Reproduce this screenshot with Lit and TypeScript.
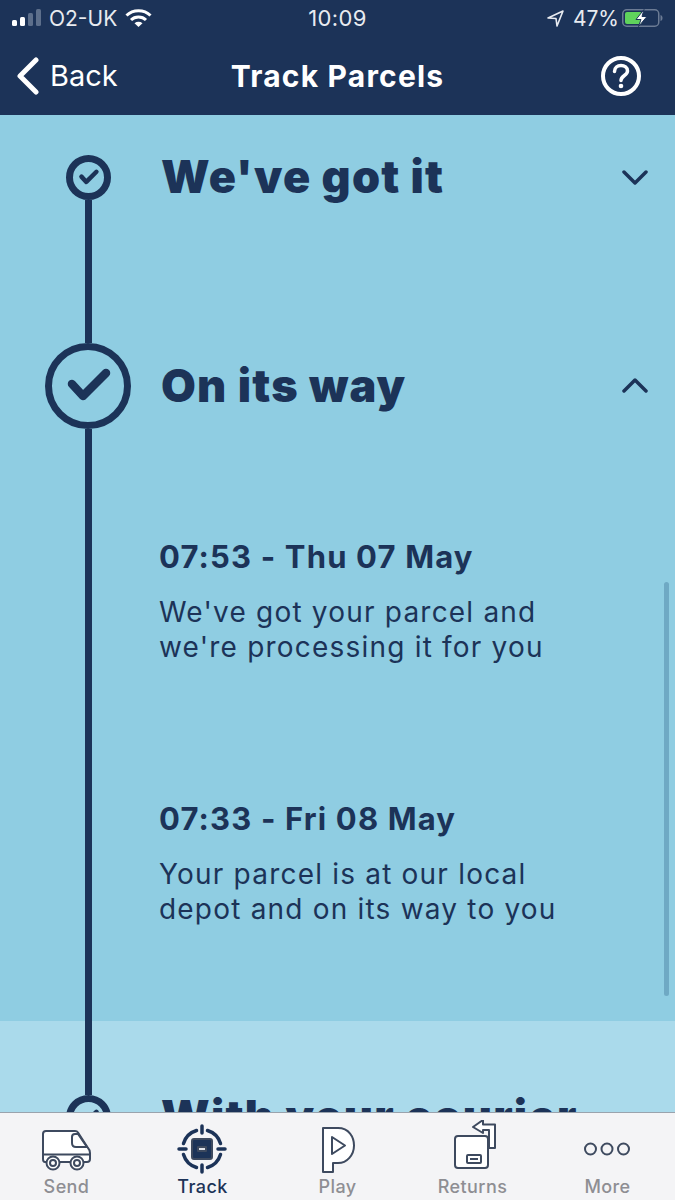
import { LitElement, html, css, svg } from 'lit';
import { customElement } from 'lit/decorators.js';

const tabIcons = {
  send: svg`
    <path d="M14 11H43Q45 11 46 12.500L56 28Q58 30 58 33V39Q58 42 55 42H13Q11 42 11 39V14Q11 11 14 11Z" fill="#fff"/>
    <path d="M11 34.500H58M43 14H46L55 27H44Q40 27 40 23V17Q40 14 43 14Z"/>
    <circle cx="21" cy="43" r="6.500" fill="#fff"/><circle cx="21" cy="43" r="3"/>
    <circle cx="45" cy="43" r="6.500" fill="#fff"/><circle cx="45" cy="43" r="3"/>`,
  track: svg`
    <g fill="none" stroke="#1c3358" stroke-width="3.500" stroke-linecap="round">
      <path d="M29.500 10.500A19.500 19.500 0 0 0 16.500 23.500M40.500 10.500A19.500 19.500 0 0 1 53.500 23.500M53.500 34.500A19.500 19.500 0 0 1 40.500 47.500M16.500 34.500A19.500 19.500 0 0 0 29.500 47.500"/>
      <path d="M35 6V13M35 45V52M12 29H19M51 29H58"/>
    </g>
    <rect x="25" y="19" width="20" height="20" rx="2" fill="#1c3358"/>
    <rect x="31" y="27" width="8" height="4" fill="#dfe3ea"/>`,
  play: svg`
    <path d="M21 8H36C47 8 52 17 52 25.500C52 35 45 43 36 43H31V52H21Z" fill="#fff"/>
    <path d="M30 17L43 25.500L30 34Z"/>`,
  returns: svg`
    <path d="M36 7L46 0V4.500H58V28H52V10H46V13Z" fill="#fff"/>
    <rect x="18" y="16" width="33" height="32" rx="3" fill="#fff"/>
    <rect x="30" y="35" width="14" height="8" rx="1"/><path d="M33 39H41"/>`,
  more: svg`
    <circle cx="18.500" cy="29" r="5.500"/><circle cx="35" cy="29" r="5.500"/><circle cx="51.500" cy="29" r="5.500"/>`,
};

const tabs = [
  { label: 'Send', icon: tabIcons.send },
  { label: 'Track', icon: tabIcons.track, active: true },
  { label: 'Play', icon: tabIcons.play },
  { label: 'Returns', icon: tabIcons.returns },
  { label: 'More', icon: tabIcons.more },
];

const entries = [
  { time: '07:53 - Thu 07 May', text: ["We've got your parcel and", "we're processing it for you"] },
  { time: '07:33 - Fri 08 May', text: ['Your parcel is at our local', 'depot and on its way to you'] },
];

@customElement('app-root')
export class AppRoot extends LitElement {
  static styles = css`
    :host {
      display: flex;
      flex-direction: column;
      width: 675px;
      height: 1200px;
      overflow: hidden;
      font-family: Inter, 'Liberation Sans', sans-serif;
      color: #1c3358;
      background: #8fcde2;
    }

    /* status bar + nav */
    .top { background: #1c3358; color: #fff; height: 115px; flex: none; }
    .status {
      display: grid;
      grid-template-columns: 1fr auto 1fr;
      align-items: center;
      height: 36px;
      padding: 0 12px;
      font-size: 21px;
      color: #e8ebf0;
    }
    .status-left, .status-right { display: flex; align-items: center; }
    .status-left { gap: 8px; }
    .status-right { justify-content: flex-end; gap: 3px; }
    .status-right .arrow { margin-right: 6px; }
    .time { font-size: 22px; letter-spacing: 0.4px; }
    .nav {
      display: grid;
      grid-template-columns: 1fr auto 1fr;
      align-items: center;
      height: 79px;
      padding: 0 16px;
    }
    .back { display: flex; align-items: center; gap: 11px; font-size: 29px; font-weight: 400; }
    .title { font-size: 30px; font-weight: 700; letter-spacing: 1.2px; }
    .help { justify-self: end; display: block; margin-right: 18px; }

    /* timeline */
    main { flex: 1; min-height: 0; overflow: hidden; position: relative; }
    .step { display: grid; grid-template-columns: 86px 1fr; padding-left: 45px; column-gap: 30px; }
    .step.light { background: #aadaeb; }
    .rail { display: flex; flex-direction: column; align-items: center; }
    .rail .line { width: 7px; flex: 1; background: #1c3358; }
    .rail svg { display: block; flex: none; }
    .head {
      display: flex;
      align-items: center;
      justify-content: space-between;
      box-sizing: border-box;
      padding: 0 27px 2px 0;
      font-size: 45px;
      font-weight: 900;
      letter-spacing: 1.2px;
      white-space: nowrap;
    }
    .step-1 { height: 228px; }
    .step-1 .lead { height: 40px; width: 7px; }
    .step-1 .head { margin-top: 40px; height: 45px; }
    .step-2 { height: 678px; }
    .step-2 .head { height: 86px; }
    .step-3 .lead { height: 74px; width: 7px; background: #1c3358; }
    .step-3 .head { margin-top: 74px; height: 45px; }

    .entries { margin-left: -2px; padding-top: 109px; display: flex; flex-direction: column; gap: 135px; }
    .entry h3 { margin: 0 0 19px; font-size: 31px; line-height: 38px; font-weight: 700; letter-spacing: 1.15px; white-space: nowrap; }
    .entry p { margin: 0; font-size: 28px; line-height: 35px; font-weight: 400; letter-spacing: 1.2px; white-space: nowrap; }

    .scrollbar {
      position: absolute;
      left: 664px;
      top: 467px;
      width: 5px;
      height: 414px;
      border-radius: 3px;
      background: #6fa9c4;
    }

    /* tab bar */
    nav {
      flex: none;
      height: 88px;
      box-sizing: border-box;
      display: grid;
      grid-template-columns: repeat(5, 135px);
      background: #f4f4f6;
      border-top: 1px solid #9aa3ad;
    }
    .tab { display: flex; flex-direction: column; align-items: center; padding-top: 7px; color: #8e8e93; }
    .tab.active { color: #1c3358; }
    .tab svg { display: block; fill: none; stroke: #3e4a5f; stroke-width: 2; stroke-linejoin: round; }
    .tab span { margin-top: 2px; font-size: 18px; line-height: 22px; font-weight: 500; letter-spacing: 0.4px; }
    .tab:first-child span { margin-right: 2px; }
  `;

  private marker(size: number) {
    const c = size / 2;
    const big = size === 86;
    const k = big ? 1 : 0.44;
    return svg`<svg width=${size} height=${size} viewBox="0 0 ${size} ${size}" fill="none" stroke="#1c3358">
      <circle cx=${c} cy=${c} r=${c - 3.5} stroke-width="7"/>
      <path d="M${c - 16 * k} ${c - 2 * k}L${c - 5 * k} ${c + 10 * k}L${c + 18 * k} ${c - 13 * k}"
        stroke-width=${big ? 8.5 : 4.5} stroke-linecap="round" stroke-linejoin="round"/>
    </svg>`;
  }

  private chevron(up = false) {
    return html`<svg width="26" height="16" viewBox="0 0 26 16" fill="none" stroke="#1c3358" stroke-width="3.500" stroke-linecap="round" stroke-linejoin="round">
      <path d=${up ? 'M2 14L13 3L24 14' : 'M2 3L13 14L24 3'}/>
    </svg>`;
  }

  render() {
    return html`
      <div class="top">
        <div class="status">
          <div class="status-left">
            <svg width="29" height="18" viewBox="0 0 29 18" fill="#fff">
              <rect x="0" y="11" width="5" height="6" rx="1.500"/>
              <rect x="8" y="8" width="5" height="9" rx="1.500"/>
              <rect x="16" y="4" width="5" height="13" rx="1.500" fill="#5d6f8b"/>
              <rect x="24" y="0" width="5" height="17" rx="1.500" fill="#5d6f8b"/>
            </svg>
            <span>O2-UK</span>
            <svg width="27" height="20" viewBox="0 0 27 20" fill="none" stroke="#fff" stroke-width="3">
              <path d="M1.500 7.500C8 1 19 1 25.500 7.500M6 12C10 8 17 8 21 12"/>
              <path d="M13.500 19L9.500 15.200C12 13.400 15 13.400 17.500 15.200Z" fill="#fff" stroke="none"/>
            </svg>
          </div>
          <span class="time">10:09</span>
          <div class="status-right">
            <svg class="arrow" width="17" height="17" viewBox="0 0 17 17" fill="none" stroke="#e8ebf0" stroke-width="1.600" stroke-linejoin="round">
              <path d="M1 8L16 1L10 16L9 8.500Z"/>
            </svg>
            <span>47%</span>
            <svg width="41" height="18" viewBox="0 0 41 18">
              <rect x="0.750" y="0.750" width="36" height="16.500" rx="4" fill="none" stroke="#6b7b94" stroke-width="1.500"/>
              <rect x="3" y="3" width="17" height="12" rx="2" fill="#5fd35c"/>
              <path d="M38.500 6V12C40 11.500 40.500 10.500 40.500 9C40.500 7.500 40 6.500 38.500 6Z" fill="#6b7b94"/>
              <path d="M22 0.500L14 10.500H19L16.500 17.500L25 7.500H20Z" fill="#fff" stroke="#1c3358" stroke-width="1"/>
            </svg>
          </div>
        </div>
        <div class="nav">
          <div class="back">
            <svg width="23" height="38" viewBox="0 0 23 38" fill="none" stroke="#fff" stroke-width="5" stroke-linecap="round" stroke-linejoin="round">
              <path d="M20 3L4 19L20 35"/>
            </svg>
            <span>Back</span>
          </div>
          <div class="title">Track Parcels</div>
          <svg class="help" width="40" height="40" viewBox="0 0 40 40" fill="none" stroke="#fff">
            <circle cx="20" cy="20" r="18" stroke-width="4"/>
            <path d="M13.500 15.500C13.500 11.500 16.500 9.500 20 9.500C23.500 9.500 26.500 11.500 26.500 15C26.500 19.500 20 19.500 20 24.500" stroke-width="3.500" stroke-linecap="round"/>
            <circle cx="20" cy="30" r="2.300" fill="#fff" stroke="none"/>
          </svg>
        </div>
      </div>

      <main>
        <section class="step step-1">
          <div class="rail"><div class="lead"></div>${this.marker(45)}<div class="line"></div></div>
          <div><div class="head"><span>We've got it</span>${this.chevron()}</div></div>
        </section>

        <section class="step step-2">
          <div class="rail">${this.marker(86)}<div class="line"></div></div>
          <div>
            <div class="head"><span>On its way</span>${this.chevron(true)}</div>
            <div class="entries">
              ${entries.map(
                (e) => html`<div class="entry">
                  <h3>${e.time}</h3>
                  <p>${e.text[0]}<br />${e.text[1]}</p>
                </div>`
              )}
            </div>
          </div>
        </section>

        <section class="step step-3 light">
          <div class="rail"><div class="lead"></div>${this.marker(45)}</div>
          <div><div class="head"><span>With your courier</span></div></div>
        </section>

        <div class="scrollbar"></div>
      </main>

      <nav>
        ${tabs.map(
          (t) => html`<div class="tab ${t.active ? 'active' : ''}">
            <svg width="71" height="54" viewBox="0 0 71 54">${t.icon}</svg>
            <span>${t.label}</span>
          </div>`
        )}
      </nav>
    `;
  }
}
